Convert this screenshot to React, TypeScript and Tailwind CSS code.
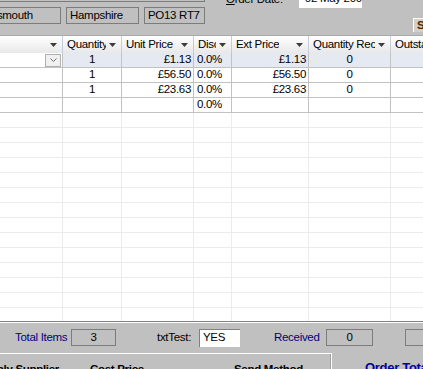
import React from 'react';

const cols = 'grid grid-cols-[63px_59px_72px_38px_77px_82px_140px]';

const Arrow: React.FC = () => (
  <svg width="7" height="4" viewBox="0 0 7 4" className="shrink-0">
    <path d="M0 0h7L3.5 4z" fill="#3c3c3c" />
  </svg>
);

const HeadCell: React.FC<{ label?: string; last?: boolean }> = ({ label, last }) => (
  <div
    className={`flex items-center justify-between gap-[3px] h-[17px] pl-[4px] pr-[5px] bg-gradient-to-b from-white to-[#e8e8e8] ${
      last ? '' : 'border-r border-[#c4ccd8]'
    }`}
  >
    <span className="overflow-hidden whitespace-nowrap">{label}</span>
    {!last && <Arrow />}
  </div>
);

type Row = { qty?: string; unit?: string; disc?: string; ext?: string; rec?: string };

const rows: Row[] = [
  { qty: '1', unit: '£1.13', disc: '0.0%', ext: '£1.13', rec: '0' },
  { qty: '1', unit: '£56.50', disc: '0.0%', ext: '£56.50', rec: '0' },
  { qty: '1', unit: '£23.63', disc: '0.0%', ext: '£23.63', rec: '0' },
  { disc: '0.0%' },
];

const Box: React.FC<{ className?: string; children?: React.ReactNode }> = ({ className, children }) => (
  <div className={`h-[17px] border border-[#7c7c7c] flex items-center pl-[3px] shrink-0 ${className ?? ''}`}>{children}</div>
);

export default function App() {
  return (
    <div
      className="w-[423px] h-[369px] overflow-hidden bg-[#c0c0c0] flex flex-col text-[11.5px] tracking-[-0.3px] text-black whitespace-nowrap"
      style={{ fontFamily: '"Liberation Sans", Arial, sans-serif' }}
    >
      {/* form fields above the grid */}
      <div className="h-[35px] flex shrink-0">
        <div className="flex flex-col -mt-[15px] -ml-[27px] w-[232px] shrink-0">
          <Box className="w-[232px]">Gosport Road</Box>
          <div className="flex mt-[5px] gap-[5px]">
            <Box className="w-[88px]">Portsmouth</Box>
            <Box className="w-[73px]">Hampshire</Box>
            <Box className="w-[61px]">PO13 RT7</Box>
          </div>
        </div>
        <div className="flex items-start -mt-[11px] ml-[21px] shrink-0">
          <span className="mt-[2px]">
            <span className="underline">O</span>rder Date:
          </span>
          <div className="ml-[16px] w-[63px] h-[19px] bg-white flex items-center pl-[6px] overflow-hidden">02 May 2008</div>
        </div>
        <div className="ml-auto mt-[18px] w-[10px] h-[14px] bg-[#d4d0c8] border-t border-l border-white overflow-hidden flex items-center pl-[3px] text-[#4a2800] font-bold shrink-0">
          S
        </div>
      </div>

      {/* grid */}
      <div className="h-[286px] bg-white overflow-hidden shrink-0 border-t border-[#a9a9a9]">
        <div className={cols}>
          <HeadCell />
          <HeadCell label="Quantity" />
          <HeadCell label="Unit Price" />
          <HeadCell label="Discount" />
          <HeadCell label="Ext Price" />
          <HeadCell label="Quantity Rec" />
          <HeadCell label="Outstanding" last />
        </div>
        {rows.map((r, i) => {
          const sel = i === 0 ? 'bg-[#e4e9f2]' : '';
          const cell = `h-[15px] border-r border-b border-[#c2c2c2] flex items-center leading-none`;
          return (
            <div key={i} className={cols}>
              <div className={`${cell} justify-end pr-[1px]`}>
                {i === 0 && (
                  <div className="w-[16px] h-[13px] bg-[#f0f0f0] border border-[#b0b0b0] flex items-center justify-center">
                    <svg width="7" height="4" viewBox="0 0 7 4">
                      <path d="M0.5 0.5L3.5 3.5L6.5 0.5" stroke="#707070" fill="none" />
                    </svg>
                  </div>
                )}
              </div>
              <div className={`${cell} ${sel} justify-center`}>{r.qty}</div>
              <div className={`${cell} ${sel} justify-end pr-[2px]`}>{r.unit}</div>
              <div className={`${cell} ${sel} pl-[3px]`}>{r.disc}</div>
              <div className={`${cell} ${sel} justify-end pr-[2px]`}>{r.ext}</div>
              <div className={`${cell} ${sel} justify-center`}>{r.rec}</div>
              <div className={`${cell} ${sel}`} />
            </div>
          );
        })}
        {Array.from({ length: 14 }).map((_, i) => (
          <div key={i} className={cols}>
            {Array.from({ length: 7 }).map((__, j) => (
              <div key={j} className="h-[15px] border-r border-b border-[#ececec]" />
            ))}
          </div>
        ))}
      </div>

      {/* totals bar */}
      <div className="flex-1 border-t border-[#808080] shadow-[inset_0_1px_0_#ffffff] flex flex-col">
        <div className="h-[31px] flex items-center shrink-0">
          <span className="ml-[15px] w-[56px] overflow-hidden text-[#000080] shrink-0">Total Items</span>
          <div className="w-[45px] h-[17px] border border-[#7c7c7c] flex items-center justify-center shrink-0">3</div>
          <span className="ml-[41px] w-[42px] shrink-0">txtTest:</span>
          <div className="w-[41px] h-[18px] bg-white border-t border-l border-[#808080] flex items-center pl-[3px] shrink-0">YES</div>
          <span className="ml-[34px] w-[52px] text-[#000080] shrink-0">Received</span>
          <div className="w-[47px] h-[17px] border border-[#7c7c7c] flex items-center justify-center shrink-0">0</div>
          <div className="ml-[32px] w-[40px] h-[17px] border border-[#7c7c7c] shrink-0" />
        </div>
        <div className="flex flex-1">
          <div className="w-[332px] border-t border-r border-white shadow-[inset_-1px_0_0_#a0a0a0] flex items-start pt-[7px] font-bold shrink-0 overflow-hidden">
            <span className="-ml-[24px] w-[114px] shrink-0">Supply Supplier</span>
            <span className="w-[144px] shrink-0">Cost Price</span>
            <span className="shrink-0">Send Method</span>
          </div>
          <span className="ml-[33px] pt-[5px] font-bold text-[13px] text-[#0000a0] underline shrink-0">Order Totals</span>
        </div>
      </div>
    </div>
  );
}
